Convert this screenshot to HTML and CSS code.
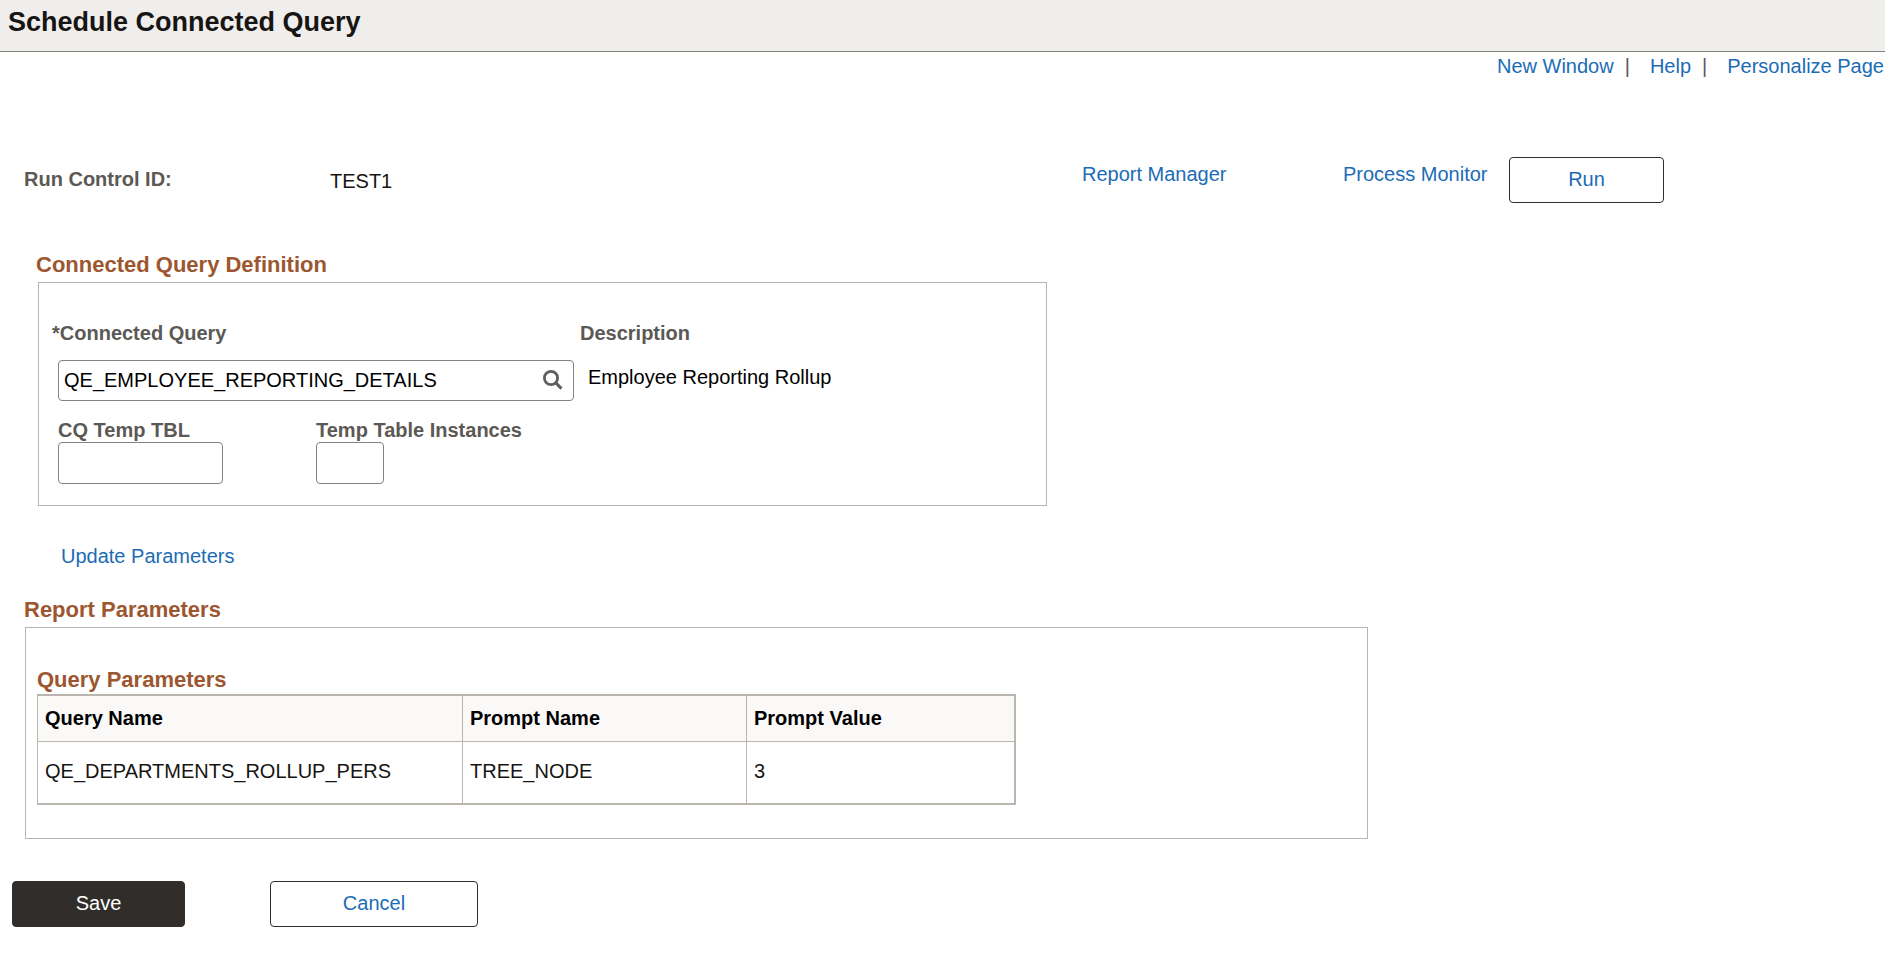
FILE: index.html
```html
<!DOCTYPE html>
<html lang="en">
<head>
    <meta charset="UTF-8">
    <meta name="viewport" content="width=device-width, initial-scale=1.0">
    <title>Schedule Connected Query</title>
    <link rel="stylesheet" href="styles.css">
</head>
<body>
    <header class="page-header">
        <h1>Schedule Connected Query</h1>
    </header>

    <nav class="page-links">
        <a href="#">New Window</a>
        <span class="divider">|</span>
        <a href="#">Help</a>
        <span class="divider">|</span>
        <a href="#">Personalize Page</a>
    </nav>

    <form class="run-form">
        <div class="run-bar">
            <span class="label run-label">Run Control ID:</span>
            <span class="run-value">TEST1</span>
            <a class="run-link" href="#">Report Manager</a>
            <a class="run-link" href="#">Process Monitor</a>
            <button type="button" class="btn">Run</button>
        </div>

        <!-- Connected query -->
        <section class="definition">
            <h2>Connected Query Definition</h2>
            <div class="group-box definition-box">
                <div class="query-row">
                    <div class="query-col">
                        <label class="label" for="connectedQuery">*Connected Query</label>
                        <div class="lookup">
                            <input type="text" id="connectedQuery" value="QE_EMPLOYEE_REPORTING_DETAILS">
                            <button type="button" class="lookup-btn" aria-label="Look up">
                                <svg width="20" height="20" viewBox="0 0 20 20" fill="none" stroke="currentColor">
                                    <circle cx="8" cy="8" r="6.6" stroke-width="2.8"/>
                                    <path d="M12.4 12.4L18.4 18.6" stroke-width="3"/>
                                </svg>
                            </button>
                        </div>
                    </div>
                    <div class="description-col">
                        <span class="label">Description</span>
                        <span class="description">Employee Reporting Rollup</span>
                    </div>
                </div>
                <div class="temp-row">
                    <div class="temp-col">
                        <label class="label" for="tempTable">CQ Temp TBL</label>
                        <input type="text" class="field temp-table" id="tempTable">
                    </div>
                    <div class="temp-col">
                        <label class="label" for="tempInstances">Temp Table Instances</label>
                        <input type="text" class="field temp-instances" id="tempInstances">
                    </div>
                </div>
            </div>
        </section>

        <a class="update-link" href="#">Update Parameters</a>

        <!-- Parameters -->
        <section class="report">
            <h2>Report Parameters</h2>
            <div class="group-box report-box">
                <h3>Query Parameters</h3>
                <table class="params">
                    <thead>
                        <tr>
                            <th class="col-query">Query Name</th>
                            <th class="col-prompt">Prompt Name</th>
                            <th>Prompt Value</th>
                        </tr>
                    </thead>
                    <tbody>
                        <tr>
                            <td>QE_DEPARTMENTS_ROLLUP_PERS</td>
                            <td>TREE_NODE</td>
                            <td>3</td>
                        </tr>
                    </tbody>
                </table>
            </div>
        </section>

        <div class="actions">
            <button type="button" class="btn btn-save">Save</button>
            <button type="button" class="btn btn-cancel">Cancel</button>
        </div>
    </form>
</body>
</html>
```

FILE: styles.css
```css
:root {
    --text: #161513;
    --label: #5b5955;
    --link: #1b6cb5;
    --heading: #9c5630;
    --line: #bab5af;
    --field-line: #87837c;
    --dark: #312d2a;
}

* {
    margin: 0;
    padding: 0;
    box-sizing: border-box;
}

body {
    font-family: "Liberation Sans", Arial, Helvetica, sans-serif;
    font-size: 20px;
    line-height: 24px;
    background: #fff;
    color: var(--text);
}

a {
    color: var(--link);
    text-decoration: none;
}

a:hover {
    text-decoration: underline;
}

input,
button {
    font: inherit;
}

h2,
h3 {
    font-size: 22px;
    line-height: 26px;
    color: var(--heading);
}

/* Header */
.page-header {
    padding: 7px 8px 14px;
    background: #f0eeec;
    border-bottom: 1px solid var(--field-line);
}

h1 {
    font-size: 27px;
    line-height: 30px;
}

.page-links {
    display: flex;
    justify-content: flex-end;
    padding: 2px 1px 0 0;
}

.divider {
    margin: 0 20px 0 11px;
    color: var(--label);
}

/* Run control */
.run-bar {
    display: grid;
    grid-template-columns: 306px 1fr 261px 166px 155px;
    align-items: start;
    max-width: 1664px;
    margin-top: 79px;
    padding-left: 24px;
}

.label {
    display: block;
    font-weight: bold;
    color: var(--label);
}

.run-label {
    padding-top: 10px;
}

.run-value {
    padding-top: 12px;
}

.run-link {
    padding-top: 5px;
}

.btn {
    height: 46px;
    padding-bottom: 2px;
    border: 1px solid var(--dark);
    border-radius: 4px;
    background: #fff;
    color: var(--link);
    cursor: pointer;
}

/* Group boxes */
.group-box {
    margin-top: 4px;
    border: 1px solid var(--line);
}

.definition {
    margin: 49px 0 0 36px;
}

.definition-box {
    max-width: 1009px;
    margin-left: 2px;
    padding: 38px 13px 21px;
}

.query-row {
    display: flex;
}

.query-col {
    width: 528px;
}

.lookup {
    display: flex;
    align-items: center;
    width: 516px;
    height: 41px;
    margin: 15px 0 0 6px;
    border: 1px solid var(--field-line);
    border-radius: 4px;
}

.lookup input {
    flex: 1;
    padding: 0 0 2px 5px;
    border: none;
    outline: none;
    background: none;
    color: #000;
}

.lookup-btn {
    display: flex;
    margin-right: 10px;
    padding-bottom: 2px;
    border: none;
    background: none;
    color: #5f5f5f;
    cursor: pointer;
}

.description {
    display: block;
    margin: 20px 0 0 8px;
    color: #000;
}

.temp-row {
    display: flex;
    margin: 17px 0 0 6px;
}

.temp-col {
    width: 258px;
}

.field {
    display: block;
    height: 42px;
    padding: 0 5px;
    border: 1px solid var(--field-line);
    border-radius: 4px;
}

.temp-table {
    width: 165px;
}

.temp-instances {
    width: 68px;
}

.update-link {
    display: inline-block;
    margin: 38px 0 29px 61px;
    vertical-align: top;
}

/* Report parameters */
.report {
    margin-left: 24px;
}

.report-box {
    max-width: 1343px;
    margin-left: 1px;
    padding: 39px 11px 33px;
}

.params {
    width: 100%;
    max-width: 979px;
    margin-top: 1px;
    border: 2px solid var(--line);
    border-left-width: 1px;
    border-spacing: 0;
    text-align: left;
}

.params th {
    padding: 10px 7px 11px;
    border-bottom: 1px solid var(--line);
    background: #fbf9f8;
    color: #000;
}

.params td {
    padding: 17px 7px 20px;
}

.params th:not(:last-child),
.params td:not(:last-child) {
    border-right: 1px solid var(--line);
}

.col-query {
    width: 425px;
}

.col-prompt {
    width: 284px;
}

/* Buttons */
.actions {
    display: flex;
    gap: 85px;
    margin: 42px 0 28px 12px;
}

.btn-save {
    width: 173px;
    background: var(--dark);
    color: #fff;
}

.btn-cancel {
    width: 208px;
}
```
